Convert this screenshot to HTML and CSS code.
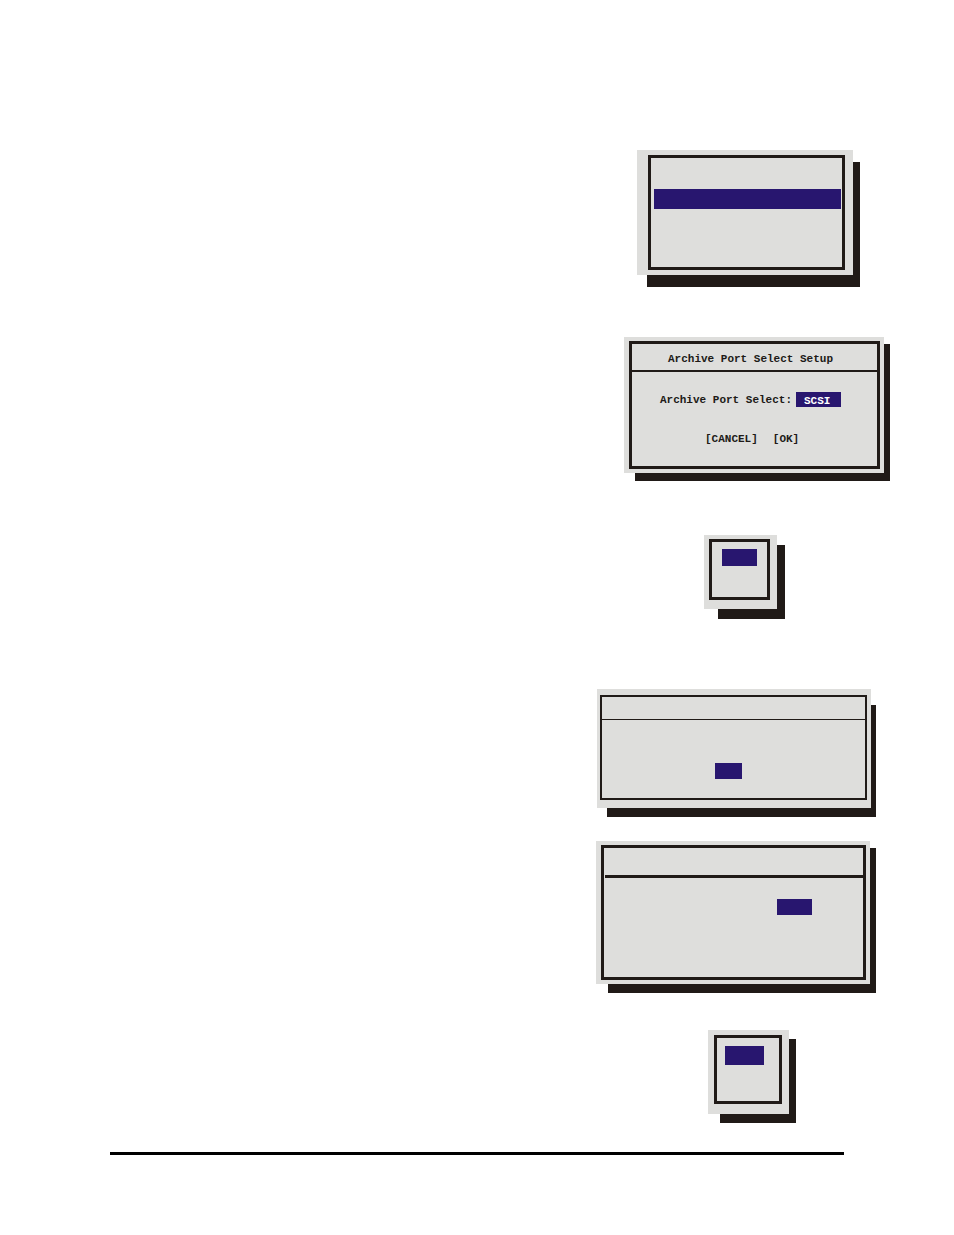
FILE: index.html
```
<!DOCTYPE html>
<html lang="en">
<head>
    <meta charset="UTF-8">
    <meta name="viewport" content="width=device-width, initial-scale=1.0">
    <title>Archive Port Select Setup</title>
    <link rel="stylesheet" href="styles.css">
</head>
<body>
    <main class="page">
        <section class="dialog menu">
            <div class="panel">
                <div class="frame">
                    <div class="highlight"></div>
                </div>
            </div>
        </section>

        <section class="dialog port-setup">
            <div class="panel">
                <form class="frame">
                    <h1 class="title">Archive Port Select Setup</h1>
                    <div class="field">
                        <label for="port">Archive Port Select:</label>
                        <select id="port" name="port">
                            <option selected>SCSI</option>
                        </select>
                    </div>
                    <div class="actions">
                        <button type="button">[CANCEL]</button>
                        <button type="button">[OK]</button>
                    </div>
                </form>
            </div>
        </section>

        <section class="dialog port-options">
            <div class="panel">
                <div class="frame">
                    <div class="highlight"></div>
                </div>
            </div>
        </section>

        <section class="dialog message">
            <div class="panel">
                <div class="frame">
                    <div class="title"></div>
                    <div class="highlight"></div>
                </div>
            </div>
        </section>

        <section class="dialog mode-setup">
            <div class="panel">
                <div class="frame">
                    <div class="title"></div>
                    <div class="highlight"></div>
                </div>
            </div>
        </section>

        <section class="dialog mode-options">
            <div class="panel">
                <div class="frame">
                    <div class="highlight"></div>
                </div>
            </div>
        </section>

        <hr class="footer-line">
    </main>
</body>
</html>
```
FILE: styles.css
```
* {
    box-sizing: border-box;
}
body {
    margin: 0;
    background: #fff;
    color: #201a17;
    font-family: "Liberation Mono", "Courier New", monospace;
    font-size: 11px;
    font-weight: bold;
    line-height: 15px;
}
.page {
    display: flex;
    flex-direction: column;
    align-items: flex-end;
    padding: 150px 0 80px;
}

/* the padding leaves room for the hard shadow on the right and bottom */
.dialog {
    background-image: linear-gradient(#201a17, #201a17);
    background-repeat: no-repeat;
    background-position: right bottom;
}
.panel {
    background: #dededc;
}
.frame {
    border: 3px solid #201a17;
}
.title {
    margin: 0;
    border-bottom: 2px solid #201a17;
    font-size: 11px;
    text-align: center;
}
.highlight {
    background: #28166f;
}

.menu {
    width: 223px;
    margin-right: 94px;
    padding: 0 7px 12px 0;
    background-size: calc(100% - 10px) calc(100% - 12px);
}
.menu .panel {
    padding: 5px 8px 5px 11px;
}
.menu .frame {
    padding: 31px 1px 58px 3px;
}
.menu .highlight {
    height: 20px;
}

.port-setup {
    width: 266px;
    margin: 50px 64px 0 0;
    padding: 0 6px 8px 0;
    background-size: calc(100% - 11px) calc(100% - 7px);
}
.port-setup .panel {
    padding: 4px 4px 4px 5px;
}
.port-setup .frame {
    padding-bottom: 19px;
}
.port-setup .title {
    padding: 8px 8px 3px 0;
}
.field {
    display: flex;
    justify-content: flex-end;
    gap: 4px;
    height: 15px;
    margin-top: 20px;
    padding-right: 36px;
}
.field label {
    padding-top: 1px;
}
.field select {
    appearance: none;
    width: 45px;
    height: 15px;
    padding: 2px 8px 0;
    border: 0;
    border-radius: 0;
    background: #28166f;
    color: #fff;
    font: inherit;
}
.actions {
    display: flex;
    gap: 15px;
    margin-top: 25px;
    padding-left: 73px;
}
.actions button {
    padding: 0;
    border: 0;
    background: none;
    color: inherit;
    font: inherit;
    cursor: pointer;
}

.port-options {
    width: 81px;
    margin: 54px 169px 0 0;
    padding: 0 8px 10px 0;
    background-size: calc(100% - 14px) calc(100% - 10px);
}
.port-options .panel {
    padding: 4px 7px 9px 5px;
}
.port-options .frame {
    padding: 7px 10px 31px;
}
.port-options .highlight {
    height: 17px;
}

.message {
    width: 279px;
    margin: 70px 78px 0 0;
    padding: 0 5px 9px 0;
    background-size: calc(100% - 10px) calc(100% - 16px);
}
.message .panel {
    padding: 6px 4px 8px 3px;
}
.message .frame {
    padding-bottom: 19px;
    border-width: 2px;
}
.message .title {
    height: 23px;
    border-bottom-width: 1px;
}
.message .highlight {
    width: 27px;
    height: 16px;
    margin: 43px 0 0 113px;
}

.mode-setup {
    width: 280px;
    margin: 24px 78px 0 0;
    padding: 0 6px 9px 0;
    background-size: calc(100% - 12px) calc(100% - 7px);
}
.mode-setup .panel {
    padding: 4px 4px 4px 5px;
}
.mode-setup .frame {
    padding-bottom: 62px;
}
.mode-setup .title {
    height: 30px;
    margin-left: 1px;
    border-bottom-width: 3px;
}
.mode-setup .highlight {
    width: 35px;
    height: 16px;
    margin: 21px 0 0 173px;
}

.mode-options {
    width: 88px;
    margin: 37px 158px 0 0;
    padding: 0 7px 9px 0;
    background-size: calc(100% - 12px) calc(100% - 9px);
}
.mode-options .panel {
    padding: 5px 7px 10px 6px;
}
.mode-options .frame {
    padding: 8px 15px 36px 8px;
}
.mode-options .highlight {
    height: 19px;
}

.footer-line {
    align-self: stretch;
    height: 3px;
    margin: 29px 110px 0;
    border: 0;
    background: #000;
}
```
